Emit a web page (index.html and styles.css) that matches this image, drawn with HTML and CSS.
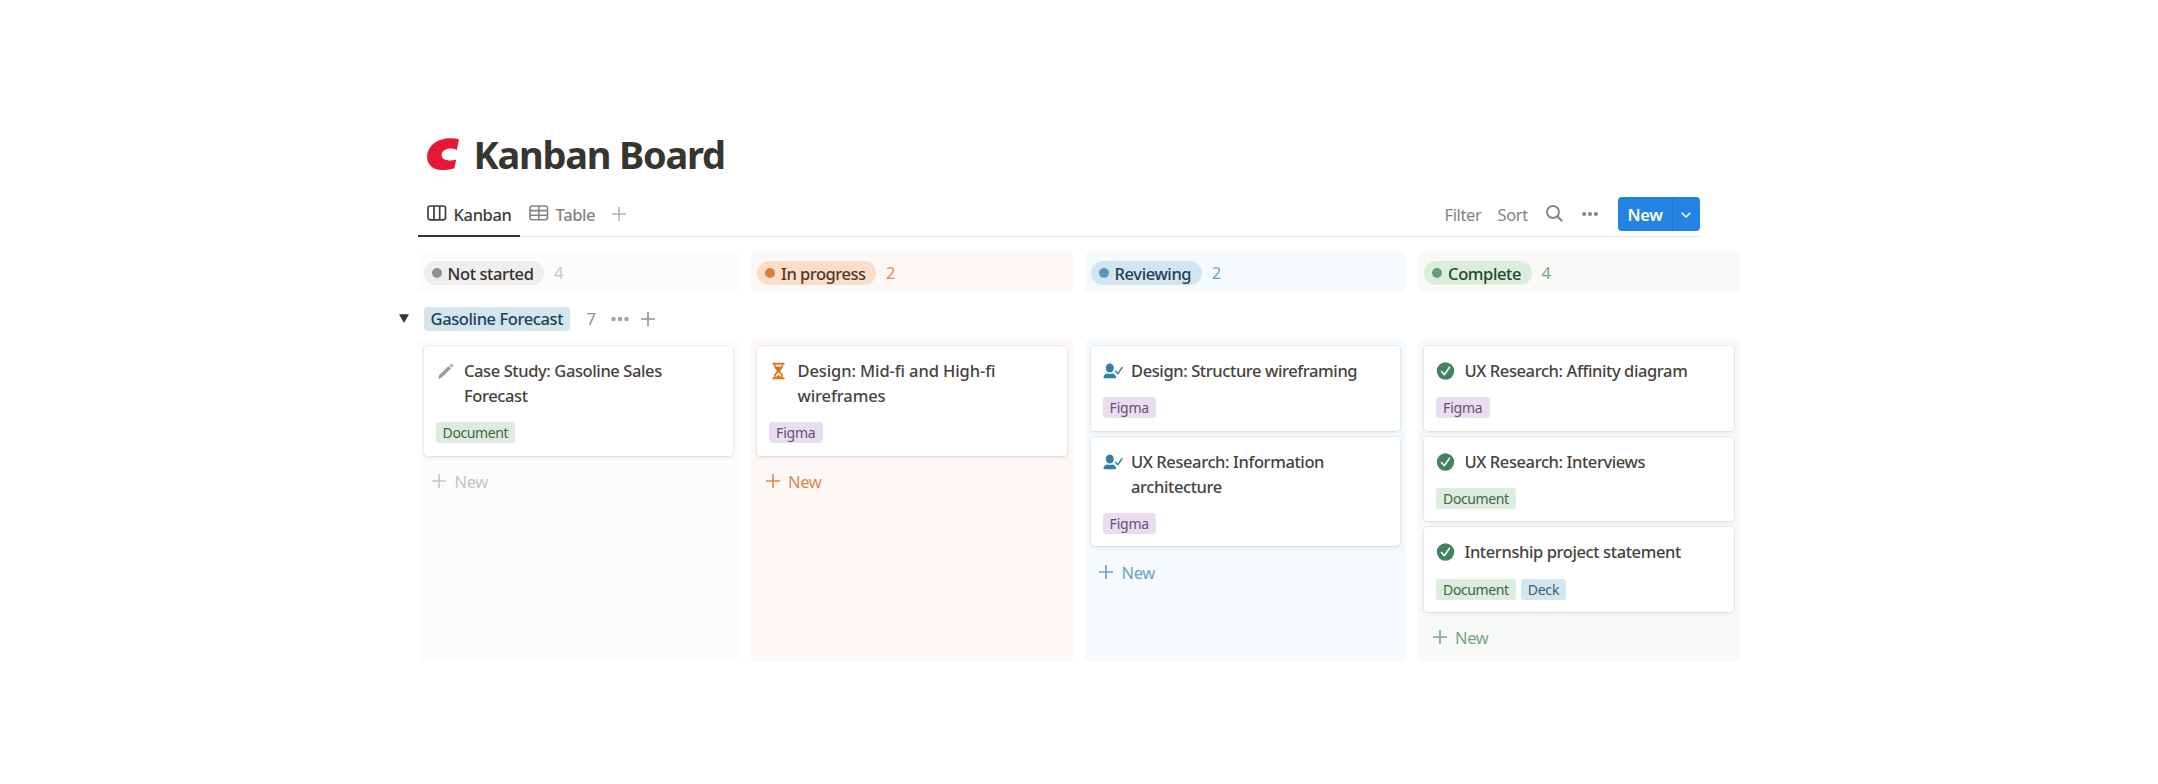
FILE: index.html
```html
<!DOCTYPE html>
<html lang="en">
<head>
<meta charset="utf-8">
<title>Kanban Board</title>
<link rel="stylesheet" href="styles.css">
</head>
<body>
<svg class="defs" aria-hidden="true">
  <symbol id="plus" viewBox="0 0 14 14"><path d="M7 0v14M0 7h14" fill="none" stroke="currentColor" stroke-width="1.6"/></symbol>
  <symbol id="dots" viewBox="0 0 18 6"><g fill="currentColor"><circle cx="2.4" cy="3" r="2.3"/><circle cx="9" cy="3" r="2.3"/><circle cx="15.6" cy="3" r="2.3"/></g></symbol>
  <symbol id="pencil" viewBox="0 0 18 18"><path d="M1 17l1.4-4.4L12.2 3.2l2.8 2.7L5.2 15.3z" fill="#a39e98"/><path d="M13 2.4l1.4-1.3c.5-.5 1.1-.4 1.5 0l1.2 1.2c.5.5.4 1 0 1.5L15.800 5z" fill="#b5b1ac"/></symbol>
  <symbol id="hourglass" viewBox="0 0 14 18"><path d="M.6.2h12.8v2H.6zM.6 15.8h12.8v2H.6z" fill="#d9730d"/><path d="M2.3 2v2.2C2.3 6.600 5.200 7.500 5.200 9s-2.900 2.400-2.900 4.800V16h9.400v-2.200c0-2.400-2.900-3.300-2.900-4.800s2.900-2.400 2.900-4.800V2z" fill="#d9730d"/><path d="M3.700 2.200h6.600v2H3.700zM3.700 15.800c0-3 1.900-4 3.300-5.400 1.400 1.400 3.300 2.400 3.300 5.400l-3.300-2.600z" fill="#fff"/></symbol>
  <symbol id="person" viewBox="0 0 20 16"><g fill="#337ea9"><ellipse cx="6.800" cy="5" rx="4" ry="4.500"/><path d="M.5 15.300c0-3.200 1.900-4.700 4-4.700 1.300.6 3.300.6 4.600 0 2.100 0 4 1.500 4 4.700z"/></g><path d="M12.500 8.300l2.300 2.500 4.300-6.300" fill="none" stroke="#337ea9" stroke-width="1.400" stroke-linecap="round" stroke-linejoin="round"/></symbol>
  <symbol id="check" viewBox="0 0 18 18"><circle cx="9" cy="9" r="8.700" fill="#448361"/><path d="M5 9.500l2.800 3.200L13 5.300" fill="none" stroke="#fff" stroke-width="1.500" stroke-linecap="round" stroke-linejoin="round"/></symbol>
</svg>
<main class="page">
  <header class="title">
    <svg class="logo" viewBox="0 0 32 32"><path d="M32 1.200C27.500 0 22 0 17.500.7 7.500 2.400.3 9.600.1 18.300-.1 27 6 32.400 17 32c3.800-.1 7.300-.6 10.300-1.700l1.900-8.700c-2.600.9-5 1-7.600.8-4.800-.3-7-2.400-7-5.300 0-3.600 3.700-6.300 8.300-6.500 2.600-.1 4.600.4 7 1.500z" fill="#e51937"/></svg>
    <h1>Kanban Board</h1>
  </header>
  <nav class="bar">
    <div class="tab active">
      <svg width="20" height="16" viewBox="0 0 20 16" fill="none" stroke="currentColor" stroke-width="1.700"><rect x="1" y="1" width="17.500" height="13.800" rx="2.200"/><path d="M7 1v14M12.700 1v14"/></svg>
      <span>Kanban</span>
    </div>
    <div class="tab table">
      <svg width="20" height="16" viewBox="0 0 20 16" fill="none" stroke="currentColor" stroke-width="1.600"><rect x="1" y="1" width="17.500" height="13.800" rx="2.200"/><path d="M9.800 1v14M1 5.600h17.500M1 10.200h17.500"/></svg>
      <span>Table</span>
    </div>
    <svg class="addview" width="14" height="14"><use href="#plus"/></svg>
    <div class="tools">
      <span class="filter">Filter</span>
      <span class="sort">Sort</span>
      <svg class="search" width="17" height="17" viewBox="0 0 17 17" fill="none" stroke="currentColor"><circle cx="7" cy="7" r="6" stroke-width="1.800"/><path d="M11.300 11.300l4.200 4.200" stroke-width="2.200" stroke-linecap="round"/></svg>
      <svg class="more" width="16" height="6"><use href="#dots"/></svg>
      <div class="newbtn"><span class="label">New</span><span class="drop"><svg width="10" height="6" viewBox="0 0 10 6"><path d="M.7.700L5 5 9.300.7" fill="none" stroke="#fff" stroke-width="1.500"/></svg></span></div>
    </div>
  </nav>
  <section class="heads">
    <div class="head gray"><span class="pill"><i></i><b>Not started</b></span><span class="count">4</span></div>
    <div class="head orange"><span class="pill"><i></i><b>In progress</b></span><span class="count">2</span></div>
    <div class="head blue"><span class="pill"><i></i><b>Reviewing</b></span><span class="count">2</span></div>
    <div class="head green"><span class="pill"><i></i><b>Complete</b></span><span class="count">4</span></div>
  </section>
  <div class="group">
    <svg class="caret" width="10" height="9" viewBox="0 0 10 9"><path d="M0 .2h10L5 9z" fill="#37352f"/></svg>
    <span class="grouptag">Gasoline Forecast</span>
    <span class="groupcount">7</span>
    <svg class="groupmore" width="18" height="6"><use href="#dots"/></svg>
    <svg width="14" height="14"><use href="#plus"/></svg>
  </div>
  <section class="columns">
    <div class="column gray">
      <article class="card"><div class="name"><svg class="ico"><use href="#pencil" x="1" y="1" width="17" height="17"/></svg><p>Case Study: Gasoline Sales<br>Forecast</p></div><div class="tags"><span class="tag doc">Document</span></div></article>
      <div class="add"><svg width="14" height="14"><use href="#plus"/></svg><span>New</span></div>
    </div>
    <div class="column orange">
      <article class="card"><div class="name loose"><svg class="ico"><use href="#hourglass" x="3" y="0" width="13" height="18"/></svg><p>Design: Mid-fi and High-fi<br>wireframes</p></div><div class="tags"><span class="tag figma">Figma</span></div></article>
      <div class="add"><svg width="14" height="14"><use href="#plus"/></svg><span>New</span></div>
    </div>
    <div class="column blue">
      <article class="card"><div class="name"><svg class="ico"><use href="#person" x="0" y="1" width="20" height="16"/></svg><p>Design: Structure wireframing</p></div><div class="tags"><span class="tag figma">Figma</span></div></article>
      <article class="card"><div class="name"><svg class="ico"><use href="#person" x="0" y="1" width="20" height="16"/></svg><p>UX Research: Information<br>architecture</p></div><div class="tags"><span class="tag figma">Figma</span></div></article>
      <div class="add"><svg width="14" height="14"><use href="#plus"/></svg><span>New</span></div>
    </div>
    <div class="column green">
      <article class="card"><div class="name"><svg class="ico"><use href="#check" x="0.500" y="0" width="18" height="18"/></svg><p>UX Research: Affinity diagram</p></div><div class="tags"><span class="tag figma">Figma</span></div></article>
      <article class="card"><div class="name"><svg class="ico"><use href="#check" x="0.500" y="0" width="18" height="18"/></svg><p>UX Research: Interviews</p></div><div class="tags"><span class="tag doc">Document</span></div></article>
      <article class="card"><div class="name"><svg class="ico"><use href="#check" x="0.500" y="0" width="18" height="18"/></svg><p>Internship project statement</p></div><div class="tags"><span class="tag doc">Document</span><span class="tag deck">Deck</span></div></article>
      <div class="add"><svg width="14" height="14"><use href="#plus"/></svg><span>New</span></div>
    </div>
  </section>
</main>
</body>
</html>
```
FILE: styles.css
```css
* { box-sizing: border-box; }
body { margin: 0; background: #fff; color: #45433d; font: 400 16.5px/24px "Noto Sans", "Open Sans", sans-serif; letter-spacing: -0.4px; white-space: nowrap; }
h1, p { margin: 0; }
svg { flex: none; display: block; }
.defs { width: 0; height: 0; position: absolute; }
.page { width: 1322px; margin-left: 417.600px; padding-top: 130px; }
.title { display: flex; align-items: center; height: 48px; padding-left: 9px; gap: 15px; }
.logo { width: 32px; height: 32px; }
h1 { font-size: 38px; line-height: 48px; font-weight: 700; letter-spacing: -1.250px; color: #37352f; }
.bar { display: flex; align-items: flex-start; width: 1282.500px; height: 59px; padding-top: 14px; border-bottom: 1.500px solid #e9e9e8; }
.tab { display: flex; align-items: center; height: 45px; padding: 0 9px 1px; gap: 7px; color: #403e38; font-weight: 500; }
.tab svg { margin-top: 0; }
.tab span { padding-top: 3px; }
.active { width: 102px; border-bottom: 2.500px solid #37352f; }
.table { color: #858480; width: 92px; padding-bottom: 3px; }
.addview { margin-top: 15px; color: #b5b4b2; }
.tools { display: flex; align-items: center; height: 34px; margin: 4.600px 0 0 auto; color: #858480; }
.tools > span { padding-top: 2px; }
.filter { width: 53px; }
.sort { width: 48px; }
.search { margin-right: 19px; }
.more { margin-right: 20px; }
.newbtn { display: flex; width: 82.500px; height: 34px; border-radius: 4px; background: #2383e2; color: #fff; font-weight: 600; line-height: 36px; }
.newbtn .label { width: 55px; padding-left: 10px; border-right: 1px solid #1d75cc; }
.drop { display: flex; flex: 1; align-items: center; justify-content: center; padding-top: 2px; }
.heads, .columns { display: grid; grid-template-columns: repeat(4, 321.500px); gap: 12px; }
.heads { margin-top: 15px; }
.head { display: flex; align-items: center; height: 40.500px; border-radius: 5px; padding: 1.500px 0 0 6px; }
.pill { display: flex; align-items: center; height: 23.500px; border-radius: 12px; padding: 0 11px 0 8px; gap: 6px; }
.pill i { width: 10px; height: 10px; border-radius: 50%; }
.pill b { font-weight: 500; padding-top: 2px; }
.orange .pill b { letter-spacing: -0.500px; }
.count { margin-left: 9.500px; }
.head.gray, .column.gray { background: #fcfcfa; }
.head.orange, .column.orange { background: #fdf7f5; }
.head.blue, .column.blue { background: #f4fafd; }
.head.green, .column.green { background: #f7faf7; }
.gray .pill { background: #efeeec; color: #32302c; }
.gray i { background: #91918e; }
.gray .count, .gray .add { color: #c7c6c4; }
.orange .pill { background: #fadec9; color: #55371c; }
.orange i { background: #d9813c; }
.orange .count, .orange .add { color: #da8a4d; }
.blue .pill { background: #d3e5ef; color: #253f52; }
.blue i { background: #5b97bd; }
.blue .count, .blue .add { color: #6ba2c5; }
.green .pill { background: #dbeddb; color: #2a4436; }
.green i { background: #6c9b7d; }
.green .count, .green .add { color: #7aa588; }
.group { display: flex; align-items: center; height: 47px; margin-left: -19px; color: #91908d; padding-top: 6px; }
.caret { margin: -2px 15px 0 0; }
.grouptag { width: 146px; height: 23.500px; border-radius: 4px; padding-left: 7px; background: #d3e5ef; color: #253f52; font-weight: 500; }
.groupcount { width: 41px; padding-left: 17px; }
.groupmore { margin-right: 12px; color: #a5a4a1; }
.columns { height: 322px; }
.column { border-radius: 5px; padding: 6.500px 5.700px 0 6px; }
.card { height: 84.500px; margin-bottom: 6.100px; padding: 13.200px 12px 0; border-radius: 4px; background: #fff; box-shadow: 0 0 0 1px rgba(15,15,15,.05), 0 2px 4px rgba(15,15,15,.07); }
.card:has(br) { height: 109.500px; }
.name { display: flex; gap: 8.400px; font-weight: 500; line-height: 24.800px; }
.loose { letter-spacing: -0.100px; }
.ico { width: 20px; height: 20px; margin-top: 3px; }
.tags { display: flex; gap: 5px; margin-top: 13.500px; }
.tag { height: 21px; border-radius: 3px; padding: 0 7px; font-size: 14px; line-height: 21px; letter-spacing: -0.200px; }
.doc { background: #dbeddb; color: #49604f; letter-spacing: -0.400px; }
.figma { background: #e8deee; color: #66507a; }
.deck { background: #d3e5ef; color: #465c70; }
.add { display: flex; align-items: center; gap: 8.500px; height: 39px; padding-left: 8.500px; }
.add span { padding-top: 2px; }
```
